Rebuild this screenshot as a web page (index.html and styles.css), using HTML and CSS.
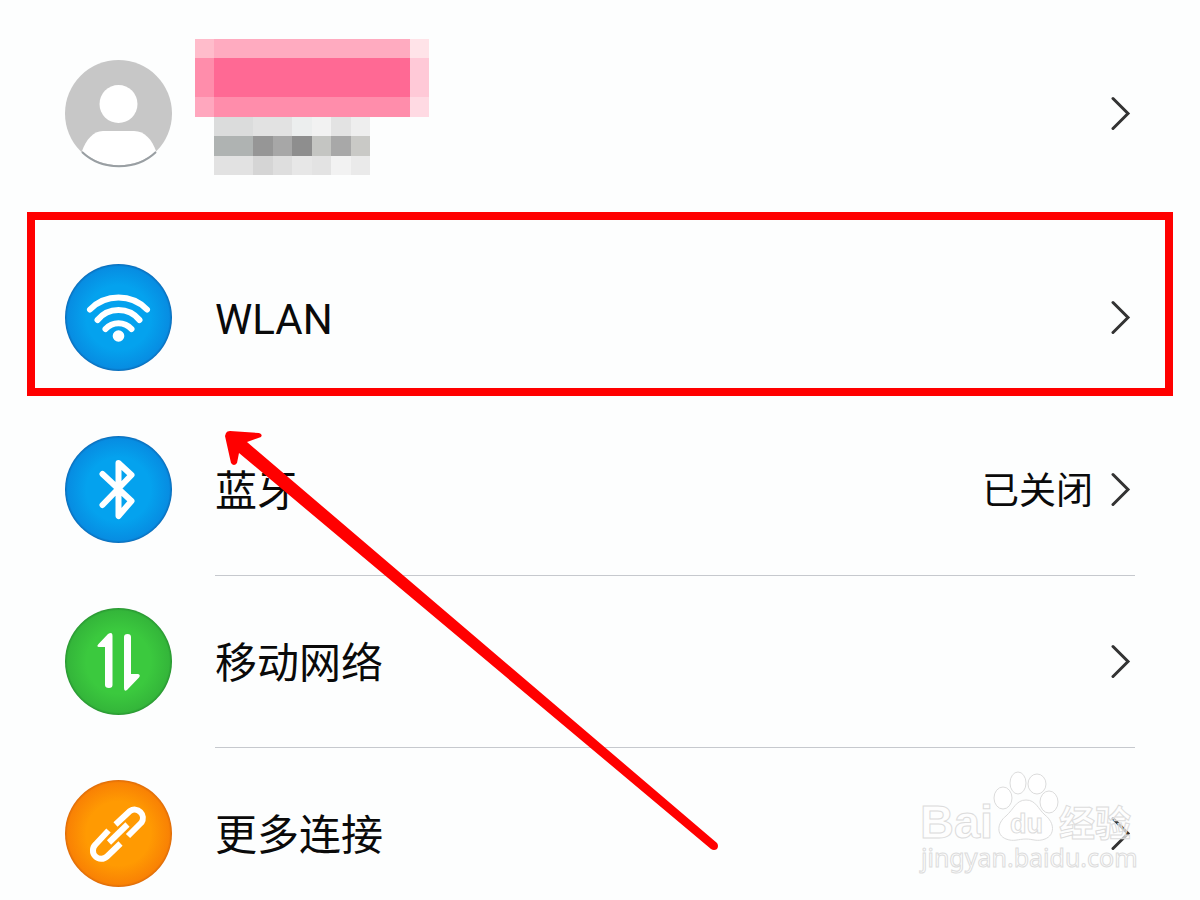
FILE: index.html
```html
<!DOCTYPE html>
<html lang="zh-CN">
<head>
    <meta charset="UTF-8">
    <meta name="viewport" content="width=device-width, initial-scale=1.0">
    <title>设置</title>
    <link rel="stylesheet" href="styles.css">
</head>
<body>
    <main class="screen">
        <a class="profile" href="#account" aria-label="账号">
            <svg class="icon" viewBox="0 0 108 108">
                <circle cx="53.5" cy="53.5" r="53.5" fill="#c7c7c7"/>
                <circle cx="53.5" cy="44" r="19" fill="#fff"/>
                <path d="M17 91C21 80 28 71 38 71H69C80 71 87 80 91 91C71 110 37 110 17 91Z" fill="#fff"/>
                <path d="M17 92C37 111 71 111 91 92" fill="none" stroke="#999fa3" stroke-width="2"/>
            </svg>
            <!-- hidden name and phone number -->
            <svg class="mosaic" viewBox="0 0 234 150" shape-rendering="crispEdges">
                <rect x="0" y="0" width="20" height="20" fill="#ffbccb"/>
                <rect x="19" y="0" width="196" height="20" fill="#ffabc0"/>
                <rect x="215" y="0" width="19" height="20" fill="#ffe3e8"/>
                <rect x="0" y="19" width="20" height="40" fill="#ff8dab"/>
                <rect x="19" y="19" width="196" height="40" fill="#ff6994"/>
                <rect x="215" y="19" width="19" height="40" fill="#ffc9d7"/>
                <rect x="0" y="58" width="20" height="20" fill="#ffa7be"/>
                <rect x="19" y="58" width="196" height="20" fill="#ff8dab"/>
                <rect x="215" y="58" width="19" height="20" fill="#ffdae3"/>

                <rect x="19" y="78" width="40" height="20" fill="#dbdcdc"/>
                <rect x="58" y="78" width="40" height="20" fill="#e2e2e2"/>
                <rect x="97" y="78" width="20" height="20" fill="#eceeee"/>
                <rect x="117" y="78" width="20" height="20" fill="#f2f2f2"/>
                <rect x="136" y="78" width="20" height="20" fill="#e3e3e3"/>
                <rect x="156" y="78" width="19" height="20" fill="#eee"/>

                <rect x="19" y="97" width="40" height="20" fill="#afb3b2"/>
                <rect x="58" y="97" width="20" height="20" fill="#969696"/>
                <rect x="78" y="97" width="20" height="20" fill="#a7a7a7"/>
                <rect x="97" y="97" width="20" height="20" fill="#8e8e8e"/>
                <rect x="117" y="97" width="20" height="20" fill="#c4c5c2"/>
                <rect x="136" y="97" width="20" height="20" fill="#a8a8a8"/>
                <rect x="156" y="97" width="19" height="20" fill="#c9c9c6"/>

                <rect x="19" y="117" width="40" height="19" fill="#e2e2e2"/>
                <rect x="58" y="117" width="20" height="19" fill="#d5d5d5"/>
                <rect x="78" y="117" width="20" height="19" fill="#dedede"/>
                <rect x="97" y="117" width="20" height="19" fill="#e7e7e7"/>
                <rect x="117" y="117" width="20" height="19" fill="#e3e3e3"/>
                <rect x="136" y="117" width="20" height="19" fill="#f2f2f2"/>
                <rect x="156" y="117" width="19" height="19" fill="#eaeaea"/>
            </svg>
            <svg class="chevron" viewBox="0 0 24 36"><path d="M2 2.500L17 17.500L2 32.500"/></svg>
        </a>

        <a class="row highlight" href="#wlan">
            <svg class="icon" viewBox="0 0 108 108">
                <defs>
                    <radialGradient id="blue">
                        <stop offset="0.6" stop-color="#04a2ee"/>
                        <stop offset="0.95" stop-color="#078de2"/>
                        <stop offset="1" stop-color="#0a6bb8"/>
                    </radialGradient>
                </defs>
                <circle cx="53.5" cy="53.5" r="53.5" fill="url(#blue)"/>
                <g class="stroke">
                    <path d="M25 45.5A40 40 0 0 1 82 45.5"/>
                    <path d="M32.5 56A27 27 0 0 1 74.5 56"/>
                    <path d="M40.5 65A17.5 17.5 0 0 1 66.5 65"/>
                </g>
                <circle cx="53.5" cy="72" r="5.8" fill="#fff"/>
            </svg>
            <span class="body">
                <span class="label">WLAN</span>
                <svg class="chevron" viewBox="0 0 24 36"><path d="M2 2.500L17 17.500L2 32.500"/></svg>
            </span>
        </a>

        <nav class="list">
            <a class="row" href="#bluetooth">
                <svg class="icon" viewBox="0 0 108 108">
                    <circle cx="53.5" cy="53.5" r="53.5" fill="url(#blue)"/>
                    <path class="stroke" d="M37.5 38L66.5 65L53.5 80V27L66.5 39L37.5 69"/>
                </svg>
                <span class="body">
                    <span class="label">蓝牙</span>
                    <span class="value">已关闭</span>
                    <svg class="chevron" viewBox="0 0 24 36"><path d="M2 2.500L17 17.500L2 32.500"/></svg>
                </span>
            </a>
            <a class="row" href="#mobile">
                <svg class="icon" viewBox="0 0 108 108">
                    <defs>
                        <radialGradient id="green">
                            <stop offset="0.6" stop-color="#3bc93e"/>
                            <stop offset="0.95" stop-color="#34b63a"/>
                            <stop offset="1" stop-color="#279430"/>
                        </radialGradient>
                    </defs>
                    <circle cx="53.5" cy="53.5" r="53.5" fill="url(#green)"/>
                    <path d="M47.500 28V77Q47.500 80 44 80Q40 80 40 77V39H34Q31 38.500 33.500 36L43 26Q47.500 23 47.500 28Z" fill="#fff"/>
                    <path d="M59 29Q59 26 62.500 26Q66 26 66 29V66H73Q76 67 74 69.500L62 82Q59 84 59 80Z" fill="#fff"/>
                </svg>
                <span class="body">
                    <span class="label">移动网络</span>
                    <svg class="chevron" viewBox="0 0 24 36"><path d="M2 2.500L17 17.500L2 32.500"/></svg>
                </span>
            </a>
            <a class="row" href="#more">
                <svg class="icon" viewBox="0 0 108 108">
                    <defs>
                        <radialGradient id="orange">
                            <stop offset="0.6" stop-color="#ff9a02"/>
                            <stop offset="0.95" stop-color="#f98204"/>
                            <stop offset="1" stop-color="#dc6a08"/>
                        </radialGradient>
                    </defs>
                    <circle cx="53.5" cy="53.5" r="53.5" fill="url(#orange)"/>
                    <g class="stroke link">
                        <path d="M50.500 44.500L65 31A8.300 8.300 0 0 1 76.500 42.500L63 56"/>
                        <path d="M43.500 50.500L30.500 64.500A8.300 8.300 0 0 0 42 76.500L55.500 63.500"/>
                        <path d="M44 62.500L62.500 44.500"/>
                    </g>
                </svg>
                <span class="body">
                    <span class="label">更多连接</span>
                    <svg class="chevron" viewBox="0 0 24 36"><path d="M2 2.500L17 17.500L2 32.500"/></svg>
                </span>
            </a>
        </nav>

        <svg class="arrow" viewBox="0 0 500 424" aria-hidden="true">
            <path d="M5 4Q6 2 9 2L38 4Q42 5 40 8L26 13L496 414Q498 417 496 420Q493 422 490 420L18 24L16 34Q13 38 10 34L4 7Z"/>
        </svg>

        <svg class="watermark" viewBox="0 0 224 108">
            <text class="latin" x="4" y="68" font-size="47">Bai</text>
            <ellipse cx="87" cy="28" rx="9" ry="11"/>
            <ellipse cx="102" cy="13" rx="8" ry="11"/>
            <ellipse cx="121" cy="14" rx="9" ry="10"/>
            <ellipse cx="133" cy="32" rx="9" ry="11"/>
            <path d="M110 30C120 30 122 39 129 45C139 53 139 65 129 69C121 72 117 69 110 69C102 69 98 72 90 69C80 65 81 53 90 46C98 39 100 30 110 30Z"/>
            <text class="latin" x="94" y="63" font-size="27">du</text>
            <text class="cjk" x="143" y="67" font-size="36">经验</text>
            <text class="site" x="5" y="97" font-size="25">jingyan.baidu.com</text>
        </svg>
    </main>
</body>
</html>
```
FILE: styles.css
```css
body {
    margin: 0;
    background: #fdfefe;
    color: #0a0a0a;
    font-family: Roboto, "Noto Sans CJK SC", sans-serif;
}
a {
    color: inherit;
    text-decoration: none;
}
svg {
    display: block;
    flex: none;
}
.screen {
    position: relative;
}
.profile {
    display: flex;
    align-items: center;
    gap: 22px;
    padding: 39px 65px 23px;
}
.profile .chevron {
    margin-left: auto;
}
.mosaic {
    width: 234px;
    height: 150px;
}
.icon {
    width: 108px;
    height: 108px;
}
.stroke {
    fill: none;
    stroke: #fff;
    stroke-width: 6;
    stroke-linecap: round;
    stroke-linejoin: round;
}
.link {
    stroke-linecap: butt;
}
.chevron {
    width: 24px;
    height: 36px;
    fill: none;
    stroke: #333;
    stroke-width: 3;
    stroke-linecap: round;
}

/* rows */
.row {
    display: flex;
    gap: 42px;
    padding: 0 65px;
}
.body {
    display: flex;
    flex: 1;
    align-items: center;
    gap: 18px;
}
.label {
    flex: 1;
    padding-top: 4px;
    font-size: 42px;
    line-height: 64px;
}
.value {
    padding-top: 4px;
    font-size: 37px;
    line-height: 64px;
}
.highlight {
    margin: 0 27px;
    padding: 44px 30px 16px;
    border: 8px solid #f00;
}
.list {
    padding-top: 8px;
}
.list .icon {
    margin: 32px 0;
}
.list .body {
    border-bottom: 1px solid #c6c9ce;
}
.list .row:last-child .icon {
    margin-bottom: 12px;
}
.list .row:last-child .body {
    padding-top: 20px;
    border-bottom: 0;
}

/* overlays */
.arrow {
    position: absolute;
    top: 429px;
    left: 221px;
    width: 500px;
    height: 424px;
    fill: #f00;
}
.watermark {
    position: absolute;
    right: 60px;
    bottom: 22px;
    width: 224px;
    height: 108px;
    fill: rgba(255, 255, 255, 0.7);
    stroke: #dcdcdc;
    stroke-width: 1;
}
.latin {
    font-family: "Liberation Sans", sans-serif;
    font-weight: bold;
}
.cjk {
    font-family: "Noto Sans CJK SC", sans-serif;
    font-weight: bold;
}
.site {
    font-family: "Noto Sans", sans-serif;
}
```
